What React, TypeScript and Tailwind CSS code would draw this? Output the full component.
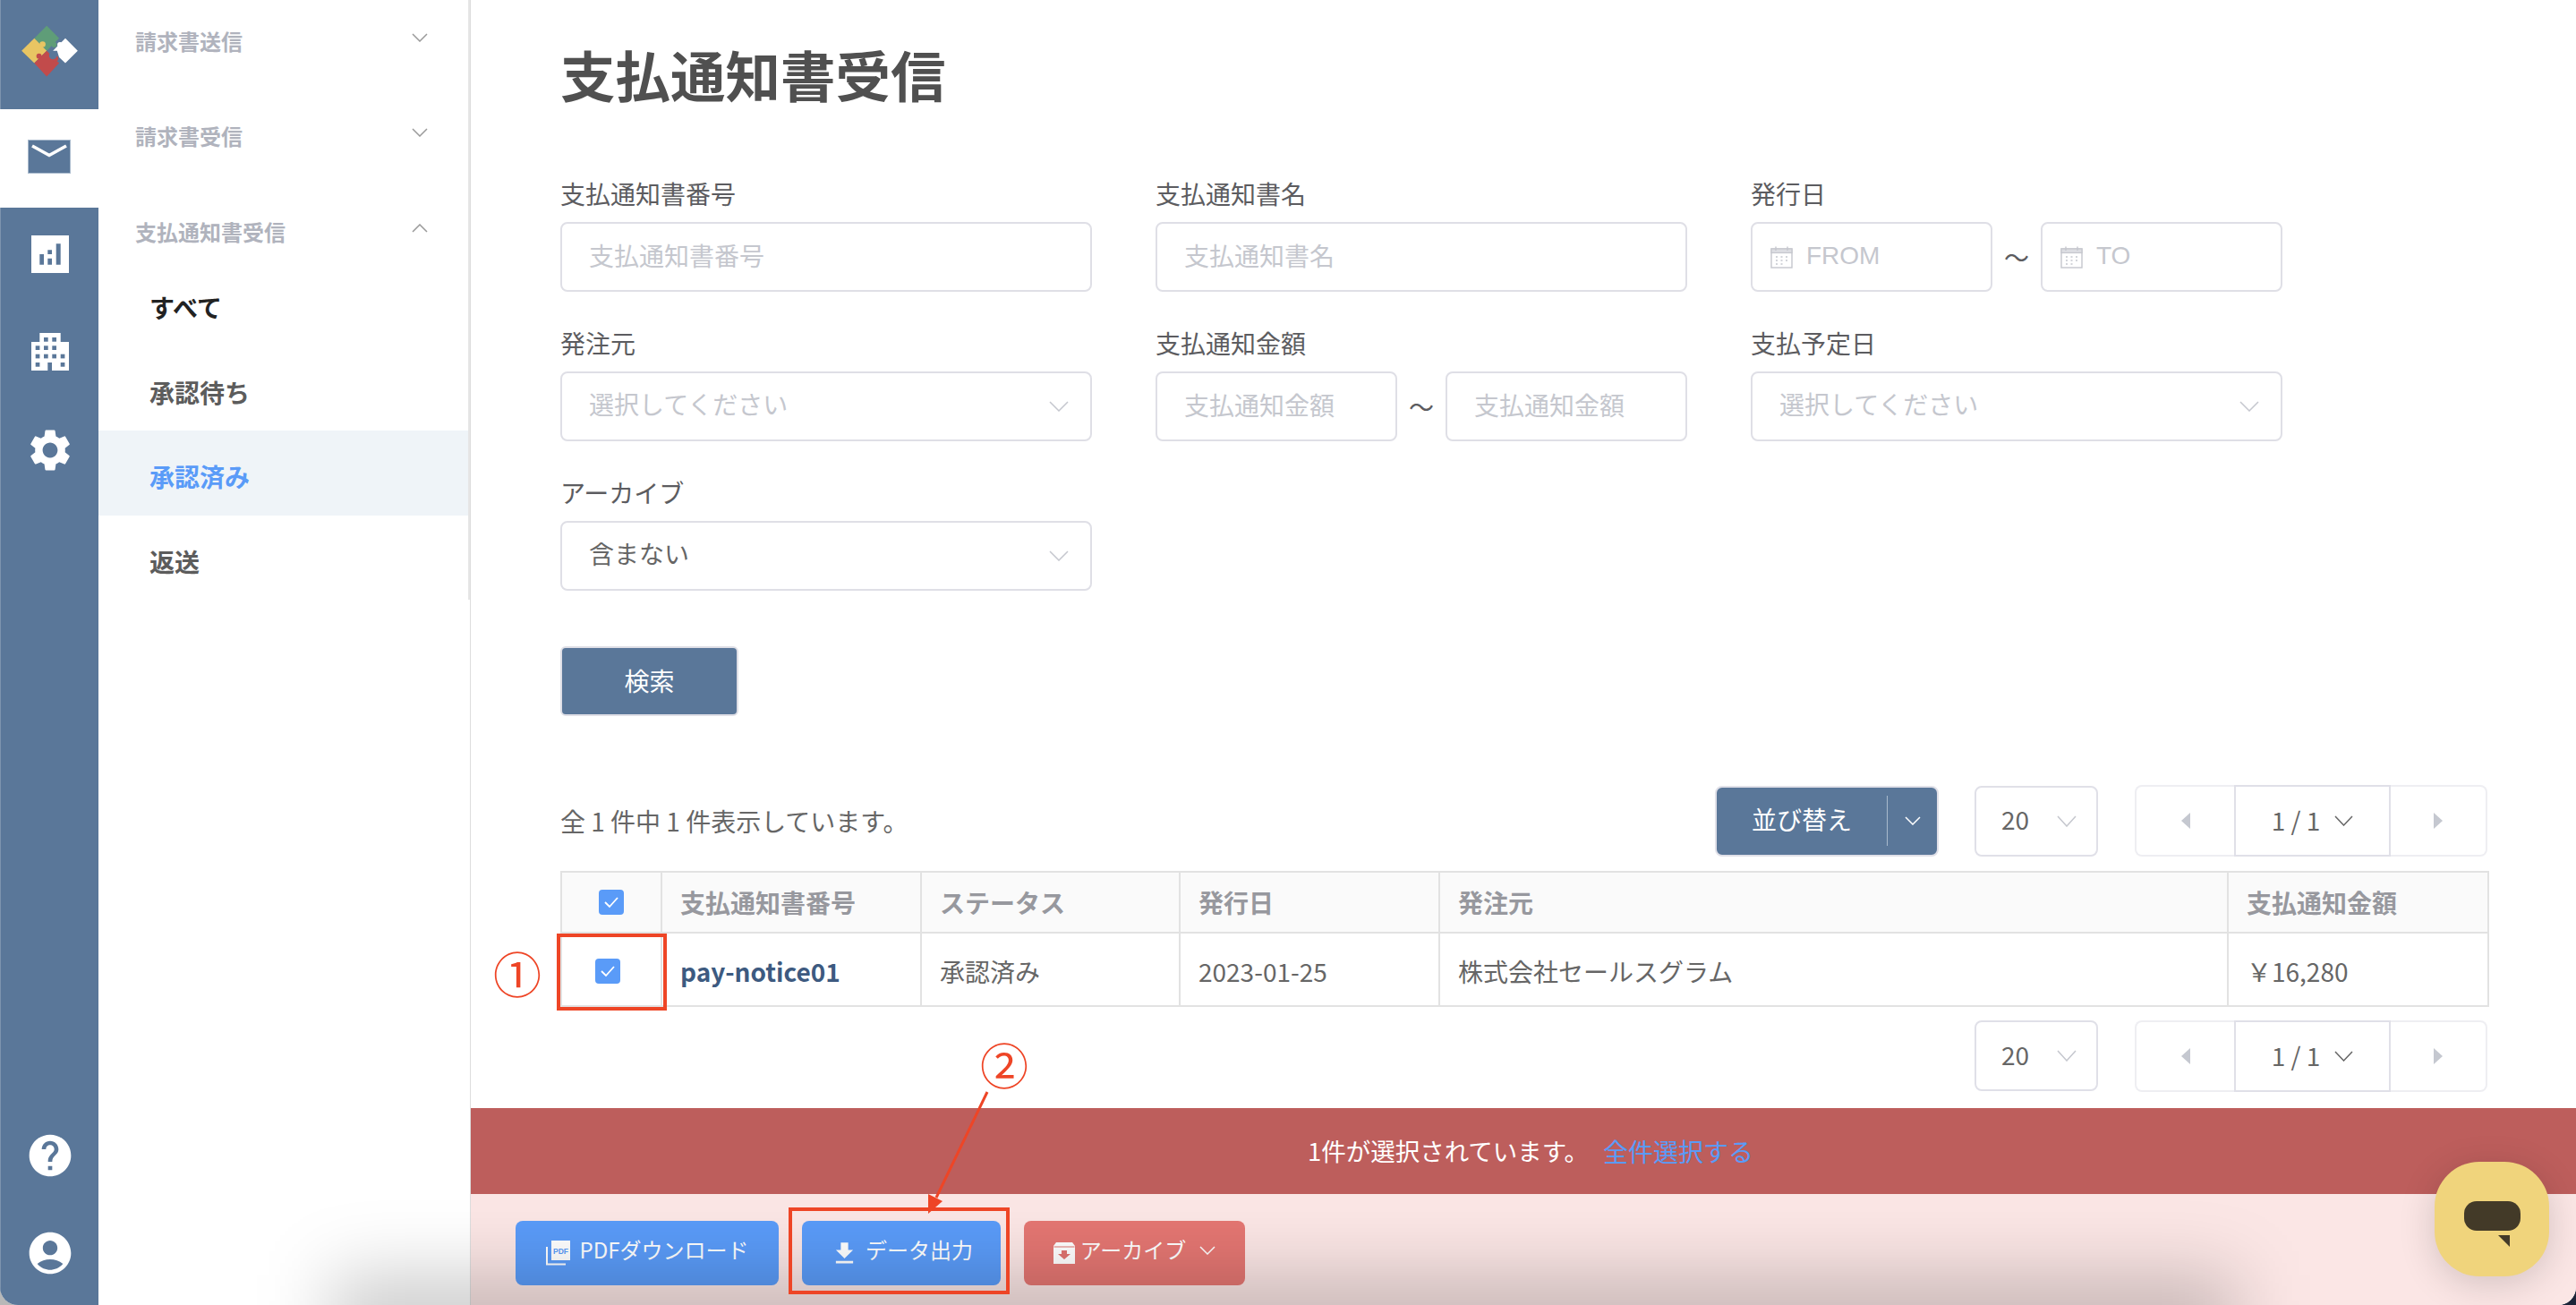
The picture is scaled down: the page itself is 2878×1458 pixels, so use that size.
import React from "react";
import { MdSettings, MdHelp, MdAccountCircle, MdFileDownload } from "react-icons/md";

function Chevron({ w = 20, h = 11, color = "#c5c7ce", up = false, className = "" }: { w?: number; h?: number; color?: string; up?: boolean; className?: string }) {
  return (
    <svg width={w} height={h} viewBox={`0 0 ${w} ${h}`} fill="none" className={className}>
      <polyline points={up ? `1,${h - 1} ${w / 2},1 ${w - 1},${h - 1}` : `1,1 ${w / 2},${h - 1} ${w - 1},1`} stroke={color} strokeWidth="1.5" />
    </svg>
  );
}

function Logo() {
  return (
    <svg width="110" height="122" viewBox="0 0 110 122">
      <g transform="scale(0.3333)">
        <polygon points="155,85 197,128 155,170 113,128" fill="#5f9d78" />
        <circle cx="180" cy="150" r="9" fill="#5f9d78" />
        <polygon points="70,170 113,128 155,170 113,212" fill="#e8c563" />
        <circle cx="141" cy="148" r="10" fill="#e8c563" />
        <polygon points="155,170 197,212 155,257 113,212" fill="#c24b4b" />
        <circle cx="129" cy="188" r="9" fill="#c24b4b" />
        <circle cx="184" cy="197" r="10" fill="#c24b4b" />
        <polygon points="176,170 218,128 260,170 218,212 197,192 190,170" fill="#ffffff" />
        <circle cx="200" cy="150" r="9" fill="#ffffff" />
        <circle cx="176" cy="186" r="13" fill="#5a7799" />
      </g>
    </svg>
  );
}

function MailIcon() {
  return (
    <svg width="48" height="38" viewBox="0 0 48 38">
      <rect x="0.5" y="0.5" width="47" height="37" fill="#5a7799" stroke="#a9bacd" strokeWidth="1" />
      <polyline points="5,7 24,17.5 43,7" fill="none" stroke="#ffffff" strokeWidth="3.6" />
    </svg>
  );
}

function ChartIcon() {
  return (
    <svg width="42" height="42" viewBox="0 0 42 42">
      <path
        fill="#ffffff"
        fillRule="evenodd"
        d="M0 0H42V42H0ZM9.3 21V32.7H14V21ZM18.3 16.3V21H23V16.3ZM18.3 25.7V32.7H23V25.7ZM27.7 9.3V32.7H32.7V9.3Z"
      />
    </svg>
  );
}

function BuildingIcon() {
  const wins = [
    [14, 5], [23.3, 5],
    [4.7, 14.3], [14, 14.3], [23.3, 14.3],
    [4.7, 23.7], [14, 23.7], [23.3, 23.7], [32.7, 23.7],
    [4.7, 33], [32.7, 33],
  ];
  return (
    <svg width="42" height="42" viewBox="0 0 42 42">
      <path fill="#ffffff" d="M9.3 0H32.7V10H42V42H0V10H9.3Z" />
      {wins.map(([x, y]) => (
        <rect key={`${x}-${y}`} x={x} y={y} width="4.7" height="4.7" fill="#5a7799" />
      ))}
      <rect x="18.3" y="33" width="4.7" height="9" fill="#5a7799" />
    </svg>
  );
}

function CalendarIcon() {
  return (
    <svg width="25" height="25" viewBox="0 0 25 25" fill="none" stroke="#c5c7ce" className="shrink-0">
      <rect x="1" y="3" width="23" height="21" strokeWidth="1.4" />
      <rect x="1" y="3" width="23" height="4.5" fill="#dcdde2" strokeWidth="1.2" />
      <path d="M6 0.5V5M19 0.5V5" strokeWidth="1.4" />
      <path d="M6 12H8M11.5 12H13.5M17 12H19M6 16H8M11.5 16H13.5M17 16H19M6 20H8M11.5 20H13.5" strokeWidth="1.5" />
    </svg>
  );
}

function PdfIcon() {
  return (
    <svg width="28" height="28" viewBox="0 0 28 28" className="shrink-0">
      <path d="M1 7V26.5H22" fill="none" stroke="#ffffff" strokeWidth="2" />
      <rect x="6" y="0" width="21" height="22" fill="#ffffff" />
      <text x="16.5" y="14.5" textAnchor="middle" fontSize="8.5" fontWeight="700" fill="#5a9bf8" fontFamily="'Liberation Sans', sans-serif">PDF</text>
    </svg>
  );
}

function ArchiveIcon() {
  return (
    <svg width="24" height="24" viewBox="0 0 24 24" className="shrink-0">
      <path d="M3 0H21L24 4V24H0V4Z" fill="#ffffff" />
      <path d="M0.5 5H23.5" stroke="#e07470" strokeWidth="1" />
      <path d="M9 9H15V13H19L12 19L5 13H9Z" fill="#e07470" />
    </svg>
  );
}

const inputCls =
  "h-[78px] w-full rounded-lg border-2 border-[#dfdfe6] bg-white pb-[5px] pl-[30px] text-[28px] text-[#666] outline-none placeholder:text-[#c5c7ce]";

function Field({ label, children }: { label: string; children: React.ReactNode }) {
  return (
    <div className="flex flex-col gap-[11px]">
      <div className="h-[40px] text-[28px] leading-[38px] text-[#5c5c60]">{label}</div>
      {children}
    </div>
  );
}

function SelectBox({ text, placeholder = false }: { text: string; placeholder?: boolean }) {
  return (
    <div className="flex h-[78px] w-full items-center justify-between rounded-lg border-2 border-[#dfdfe6] bg-white pl-[30px] pr-[24px]">
      <span className={`pb-[6px] text-[28px] ${placeholder ? "text-[#c5c7ce]" : "text-[#666]"}`}>{text}</span>
      <Chevron w={22} h={12} />
    </div>
  );
}

function DateBox({ text }: { text: string }) {
  return (
    <div className="flex h-[78px] w-[270px] items-center gap-[15px] rounded-lg border-2 border-[#dfdfe6] bg-white pl-[20px]">
      <CalendarIcon />
      <span className="pb-[2px] font-['Liberation_Sans',sans-serif] text-[28px] text-[#c5c7ce]">{text}</span>
    </div>
  );
}

function PageSize() {
  return (
    <div className="flex h-[79px] w-[138px] items-center justify-between rounded-lg border-2 border-[#e0e0e8] bg-white pl-[28px] pr-[22px]">
      <span className="pb-[4px] text-[28px] text-[#666]">20</span>
      <Chevron w={22} h={13} />
    </div>
  );
}

function Pagination() {
  return (
    <div className="flex h-[80px] w-[394px] items-stretch">
      <div className="flex w-[111px] items-center justify-center rounded-l-lg border-2 border-r-0 border-[#eeeef2] bg-white">
        <div className="h-0 w-0 border-y-[9px] border-r-[10px] border-y-transparent border-r-[#c5c8d0]" />
      </div>
      <div className="flex w-[175px] items-center justify-center gap-[16px] border-2 border-[#e0e0e8] bg-white">
        <span className="pb-[3px] text-[28px] text-[#666]">1 / 1</span>
        <Chevron w={21} h={12} color="#666" />
      </div>
      <div className="flex w-[108px] items-center justify-center rounded-r-lg border-2 border-l-0 border-[#eeeef2] bg-white">
        <div className="h-0 w-0 border-y-[9px] border-l-[10px] border-y-transparent border-l-[#c5c8d0]" />
      </div>
    </div>
  );
}

function Check({ className = "" }: { className?: string }) {
  return (
    <div className={`flex h-[28px] w-[28px] items-center justify-center rounded-[4px] bg-[#5a9bf8] ${className}`}>
      <svg width="18" height="14" viewBox="0 0 18 14" fill="none">
        <polyline points="2,7 7,12 16,2" stroke="#ffffff" strokeWidth="1.8" />
      </svg>
    </div>
  );
}

const thCls = "border-2 border-[#e2e2e2] px-[20px] text-left text-[28px] font-bold text-[#97989e]";
const tdCls = "border-2 border-[#e2e2e2] px-[20px] pt-[4px] text-[28px] text-[#666]";

function NavHead({ label, open = false }: { label: string; open?: boolean }) {
  return (
    <div className="flex h-[60px] items-center justify-between pl-[41px] pr-[45px]">
      <span className="text-[24px] font-bold text-[#b0b3bd]">{label}</span>
      <Chevron w={18} h={10} color="#9a9a9a" up={open} className="mb-[8px]" />
    </div>
  );
}

function NavItem({ label, cls, bg = "" }: { label: string; cls: string; bg?: string }) {
  return (
    <div className={`flex h-[94.5px] items-center pl-[57px] pt-[8px] text-[28px] font-bold ${bg} ${cls}`}>{label}</div>
  );
}

export default function App() {
  return (
    <div className="relative h-[1458px] w-[2878px] overflow-hidden bg-gradient-to-r from-[#b8b8b8] to-[#1c2438] font-['Noto_Sans_CJK_JP','Liberation_Sans',sans-serif]">
      <div className="flex h-full w-full overflow-hidden rounded-b-[20px] bg-white">
        {/* icon rail */}
        <aside className="flex w-[110px] shrink-0 flex-col items-center border-l border-[#7d94ae] bg-[#5a7799]">
          <div className="flex h-[122px] w-full items-center justify-center">
            <Logo />
          </div>
          <div className="-ml-px flex h-[110px] items-center justify-center self-stretch bg-white pb-[4px]">
            <MailIcon />
          </div>
          <div className="mt-[31px]"><ChartIcon /></div>
          <div className="mt-[67px]"><BuildingIcon /></div>
          <MdSettings className="mt-[61px] text-white" size={56} />
          <div className="mt-auto flex flex-col items-center gap-[53px] pb-[30px]">
            <MdHelp className="text-white" size={56} />
            <MdAccountCircle className="text-white" size={56} />
          </div>
        </aside>

        {/* sub navigation */}
        <nav className="w-[415px] shrink-0">
          <div className="flex h-[670px] flex-col gap-[47px] border-r-2 border-[#e6e6e6] pt-[16px]">
            <NavHead label="請求書送信" />
            <NavHead label="請求書受信" />
            <div>
              <NavHead label="支払通知書受信" open />
              <div className="mt-[3px]">
                <NavItem label="すべて" cls="text-[#222]" />
                <NavItem label="承認待ち" cls="text-[#5c5c5c]" />
                <NavItem label="承認済み" cls="text-[#5a9bf8]" bg="bg-[#eff4f8]" />
                <NavItem label="返送" cls="text-[#5c5c5c]" />
              </div>
            </div>
          </div>
        </nav>

        {/* main */}
        <main className="flex min-w-0 flex-1 flex-col border-l border-[#dddddd]">
          <div className="flex-1 pl-[100px] pr-[99px] pt-[48px]">
            <h1 className="h-[70px] text-[61.5px] font-bold leading-[70px] text-[#505050]">支払通知書受信</h1>
            <div className="mt-[79px] grid grid-cols-[594px_594px_594px] gap-x-[71px] gap-y-[38px]">
              <Field label="支払通知書番号">
                <input className={inputCls} placeholder="支払通知書番号" />
              </Field>
              <Field label="支払通知書名">
                <input className={inputCls} placeholder="支払通知書名" />
              </Field>
              <Field label="発行日">
                <div className="flex items-center justify-between">
                  <DateBox text="FROM" />
                  <span className="text-[28px] text-[#5c5c60]">〜</span>
                  <DateBox text="TO" />
                </div>
              </Field>
              <Field label="発注元">
                <SelectBox text="選択してください" placeholder />
              </Field>
              <Field label="支払通知金額">
                <div className="flex items-center justify-between">
                  <input className={`${inputCls} !w-[270px]`} placeholder="支払通知金額" />
                  <span className="text-[28px] text-[#5c5c60]">〜</span>
                  <input className={`${inputCls} !w-[270px]`} placeholder="支払通知金額" />
                </div>
              </Field>
              <Field label="支払予定日">
                <SelectBox text="選択してください" placeholder />
              </Field>
              <Field label="アーカイブ">
                <SelectBox text="含まない" />
              </Field>
            </div>

            <button className="mt-[62px] flex h-[78px] w-[199px] items-center justify-center rounded-md border-2 border-[#dfdfe6] bg-[#5a7799] pb-[3px] text-[28px] text-white">
              検索
            </button>

            <div className="mt-[77px] flex h-[80px] items-center justify-between">
              <span className="text-[28px] text-[#666]">全 1 件中 1 件表示しています。</span>
              <div className="flex items-center">
                <div className="flex h-[79px] w-[250px] items-center rounded-lg border-2 border-[#e0e0e8] bg-[#5a7799] text-white">
                  <span className="flex-1 pb-[4px] text-center text-[28px]">並び替え</span>
                  <div className="h-[56px] w-px bg-[#a9bacd]" />
                  <div className="flex w-[55px] justify-center">
                    <Chevron w={18} h={10} color="#ffffff" />
                  </div>
                </div>
                <div className="ml-[40px]"><PageSize /></div>
                <div className="ml-[41px]"><Pagination /></div>
              </div>
            </div>

            <table className="mt-[16px] w-full table-fixed border-collapse">
              <colgroup>
                <col className="w-[112px]" />
                <col className="w-[290px]" />
                <col className="w-[289px]" />
                <col className="w-[290px]" />
                <col className="w-[881px]" />
                <col className="w-[291px]" />
              </colgroup>
              <thead>
                <tr className="h-[68px] bg-[#fafafa]">
                  <th className="border-2 border-[#e2e2e2]">
                    <Check className="mx-auto" />
                  </th>
                  <th className={thCls}>支払通知書番号</th>
                  <th className={thCls}>ステータス</th>
                  <th className={thCls}>発行日</th>
                  <th className={thCls}>発注元</th>
                  <th className={thCls}>支払通知金額</th>
                </tr>
              </thead>
              <tbody>
                <tr className="h-[82px]">
                  <td className="border-2 border-[#e2e2e2] pt-[4px]">
                    <Check className="mx-auto -translate-x-[4px]" />
                  </td>
                  <td className={`${tdCls} !font-bold !text-[#3d5a80]`}>pay-notice01</td>
                  <td className={tdCls}>承認済み</td>
                  <td className={tdCls}>2023-01-25</td>
                  <td className={tdCls}>株式会社セールスグラム</td>
                  <td className={tdCls}>￥16,280</td>
                </tr>
              </tbody>
            </table>

            <div className="mt-[15px] flex justify-end">
              <PageSize />
              <div className="ml-[41px]"><Pagination /></div>
            </div>
          </div>

          <div className="flex h-[96px] shrink-0 items-center justify-center gap-[16px] bg-[#bd5e5c] pl-[16px] text-[28px]">
            <span className="text-[27.5px] text-white">1件が選択されています。</span>
            <span className="text-[#5a9bf8]">全件選択する</span>
          </div>
          <div className="flex h-[124px] shrink-0 gap-[26px] bg-[#fbe6e5] pl-[50px] pt-[30px]">
            <button className="flex h-[72px] w-[294px] items-center justify-center gap-[10px] rounded-lg bg-[#5a9bf8] text-[24px] text-white">
              <PdfIcon />
              <span className="pb-[8px]">PDFダウンロード</span>
            </button>
            <button className="flex h-[72px] w-[222px] items-center justify-center gap-[7px] rounded-lg bg-[#5a9bf8] text-[24px] text-white">
              <MdFileDownload size={33} />
              <span className="pb-[8px]">データ出力</span>
            </button>
            <button className="flex h-[72px] w-[247px] items-center justify-center gap-[6px] rounded-lg bg-[#e47672] text-[24px] text-white">
              <ArchiveIcon />
              <span className="pb-[8px]">アーカイブ</span>
              <Chevron w={18} h={10} color="#ffffff" className="mb-[6px] ml-[9px]" />
            </button>
          </div>
        </main>
      </div>

      {/* window shadow over the bottom edge */}
      <div className="pointer-events-none absolute bottom-[-66px] left-[370px] right-[380px] h-[100px] bg-black/20 blur-[40px]" />

      {/* annotations */}
      <div className="pointer-events-none absolute left-[622px] top-[1043px] h-[86px] w-[123px] border-4 border-[#ee4526]" />
      <span className="absolute left-[551px] top-[1047px] text-[54px] leading-[80px] text-[#ee4526]">①</span>
      <span className="absolute left-[1095px] top-[1149px] text-[54px] leading-[80px] text-[#ee4526]">②</span>
      <div className="pointer-events-none absolute left-[881px] top-[1349px] h-[97px] w-[247px] border-4 border-[#ee4526]" />
      <svg className="pointer-events-none absolute left-[1020px] top-[1210px]" width="100" height="160" viewBox="0 0 100 160">
        <line x1="83" y1="10" x2="26" y2="128" stroke="#ee4526" strokeWidth="3" />
        <polygon points="17,146 17,124 33,132" fill="#ee4526" />
      </svg>

      {/* chat launcher */}
      <div className="absolute left-[2720px] top-[1298px] flex h-[128px] w-[128px] items-center justify-center rounded-[50px] bg-[#f0d47c] shadow-[0_8px_40px_rgba(0,0,0,0.16)]">
        <div className="relative mb-[8px] h-[33px] w-[63px] rounded-[14px] bg-[#433a28]">
          <div className="absolute left-[38px] top-[38px] h-0 w-0 border-l-[13px] border-t-[13px] border-l-transparent border-t-[#433a28]" />
        </div>
      </div>
    </div>
  );
}
